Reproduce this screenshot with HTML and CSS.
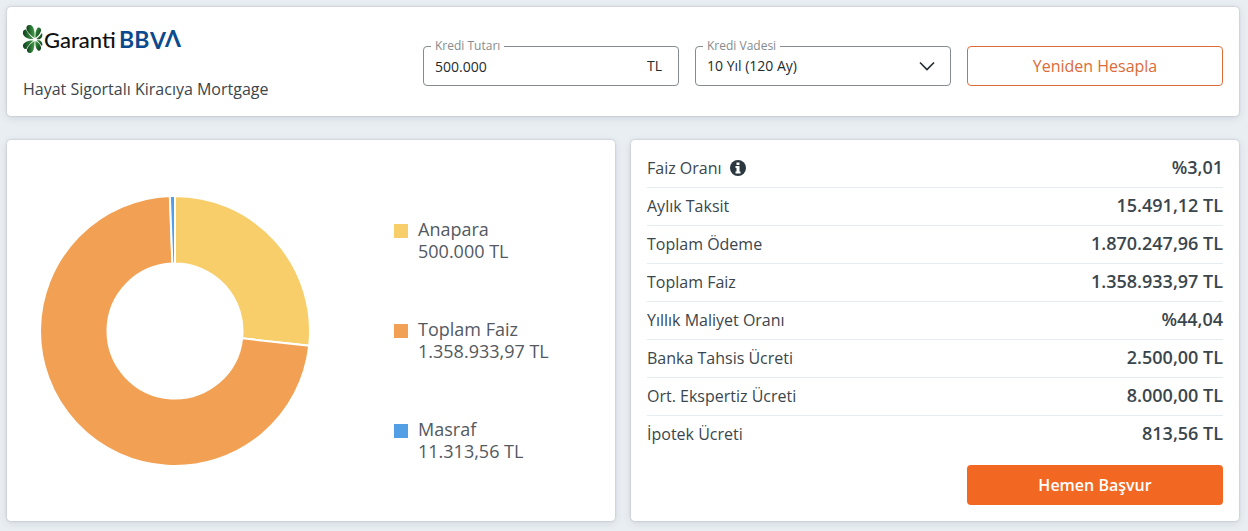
FILE: index.html
```html
<!DOCTYPE html>
<html lang="tr">
<head>
<meta charset="utf-8">
<meta name="viewport" content="width=device-width, initial-scale=1">
<title>Hayat Sigortalı Kiracıya Mortgage</title>
<link rel="stylesheet" href="styles.css">
</head>
<body>
<main class="page">
  <section class="card header">
    <div class="product">
      <svg class="logo" width="162" height="32" viewBox="0 0 162 32" role="img" aria-label="Garanti BBVA">
        <defs>
          <linearGradient id="leaf" x1="0" y1="0" x2="1" y2="0">
            <stop offset="0" stop-color="#0d3f1c"/>
            <stop offset="1" stop-color="#43a047"/>
          </linearGradient>
          <linearGradient id="leafDark" x1="0" y1="0" x2="1" y2="1">
            <stop offset="0" stop-color="#3c9a45"/>
            <stop offset="1" stop-color="#0b3517"/>
          </linearGradient>
        </defs>
        <g fill="url(#leaf)">
          <path d="M11.500 15C7 12 2.500 7.500 3.500 4C4.500 1.500 8 1.500 9.500 3.500C11.500 6 12 11 11.500 15Z"/>
          <path d="M10.500 16C6 16.500 1 14.500 0 11C-0.500 8 1 6 3 6.500C4.500 10 7.500 13 10.500 16Z"/>
          <path d="M11.500 18C11.500 23 11 28 8.500 29.500C6 31 3.500 29 4 26.500C5 23 8 20 11.500 18Z"/>
          <path d="M10.500 17.500C6 17 1 19 0 22C-0.300 25 1.500 26.500 3.500 26C5 22.500 7.500 20 10.500 17.500Z"/>
        </g>
        <g fill="url(#leafDark)">
          <path d="M12.500 15C12 11 13 6 15 4.500C17 4 18.500 6 18 8C17 11 15 13 12.500 15Z"/>
          <path d="M13.500 16C16 14 18 11 19 10C20 12 19 15 17 16C16 16.300 14.500 16.300 13.500 16Z"/>
          <path d="M12.500 18C12 22 13 26 15 27.500C17 28.500 18.500 26 18 24C17 21 15 19 12.500 18Z"/>
          <path d="M13.500 17.500C16 19 18 22 19 23C20 21 19 18.500 17 17.500C16 17 14.500 17 13.500 17.500Z"/>
        </g>
        <text class="logo-garanti" x="21" y="25">Garanti</text>
        <text class="logo-bbva" x="96" y="25">BB</text>
        <text class="logo-bbva" x="127" y="26">V</text>
        <text class="logo-bbva" x="142" y="24">Λ</text>
      </svg>
      <h1 class="product-name">Hayat Sigortalı Kiracıya Mortgage</h1>
    </div>
    <form class="calculator">
      <div class="field">
        <label class="field-label" for="amount">Kredi Tutarı</label>
        <input class="field-control" id="amount" type="text" value="500.000">
        <span class="field-unit">TL</span>
      </div>
      <div class="field">
        <label class="field-label" for="term">Kredi Vadesi</label>
        <select class="field-control field-select" id="term"><option>10 Yıl (120 Ay)</option></select>
        <svg class="chevron" width="16" height="10" viewBox="0 0 16 10" aria-hidden="true"><path d="M1 1.500L8 8.500L15 1.500"/></svg>
      </div>
      <button class="button button-outline" type="button">Yeniden Hesapla</button>
    </form>
  </section>

  <div class="columns">
    <section class="card chart">
      <svg class="donut" width="270" height="270" viewBox="-135 -135 270 270" role="img" aria-label="Ödeme dağılımı">
        <path class="fill-principal" d="M0-135A135 135 0 0 1 134.200 14.670L67.100 7.340A67.500 67.500 0 0 0 0-67.500Z"/>
        <path class="fill-interest" d="M134.200 14.670A135 135 0 1 1-5.140-134.900L-2.570-67.450A67.500 67.500 0 1 0 67.100 7.340Z"/>
        <path class="fill-cost" d="M-5.140-134.900A135 135 0 0 1 0-135L0-67.500A67.500 67.500 0 0 0-2.570-67.450Z"/>
      </svg>
      <ul class="legend">
        <li class="legend-item"><span class="swatch swatch-principal"></span><div>Anapara<br>500.000 TL</div></li>
        <li class="legend-item"><span class="swatch swatch-interest"></span><div>Toplam Faiz<br>1.358.933,97 TL</div></li>
        <li class="legend-item"><span class="swatch swatch-cost"></span><div>Masraf<br>11.313,56 TL</div></li>
      </ul>
    </section>

    <section class="card summary">
      <table class="details">
        <tr><th scope="row"><span class="with-icon">Faiz Oranı
          <svg width="16" height="16" viewBox="0 0 16 16" aria-hidden="true"><circle cx="8" cy="8" r="8" fill="#2b373e"/><path fill="#fff" d="M6.500 2.500h3v2.500h-3zM5.500 6h4v5.500h1v2h-5v-2h1v-3.500h-1z"/></svg></span></th><td>%3,01</td></tr>
        <tr><th scope="row">Aylık Taksit</th><td>15.491,12 TL</td></tr>
        <tr><th scope="row">Toplam Ödeme</th><td>1.870.247,96 TL</td></tr>
        <tr><th scope="row">Toplam Faiz</th><td>1.358.933,97 TL</td></tr>
        <tr><th scope="row">Yıllık Maliyet Oranı</th><td>%44,04</td></tr>
        <tr><th scope="row">Banka Tahsis Ücreti</th><td>2.500,00 TL</td></tr>
        <tr><th scope="row">Ort. Ekspertiz Ücreti</th><td>8.000,00 TL</td></tr>
        <tr><th scope="row">İpotek Ücreti</th><td>813,56 TL</td></tr>
      </table>
      <button class="button button-primary" type="button">Hemen Başvur</button>
    </section>
  </div>
</main>
</body>
</html>
```

FILE: styles.css
```css
* {
  box-sizing: border-box;
}

body {
  margin: 0;
  background: #e9eef2;
  color: #3b464c;
  font-family: "Open Sans", "Noto Sans", sans-serif;
  font-size: 16px;
}

.page {
  display: flex;
  flex-direction: column;
  gap: 24px;
  padding: 7px 9px 9px 7px;
}

.card {
  background: #fff;
  border-radius: 4px;
  box-shadow: 0 0 2px rgba(40, 60, 75, 0.3), 0 2px 8px rgba(40, 60, 75, 0.12);
}

.header {
  display: grid;
  grid-template-columns: 1fr 2fr;
  align-items: start;
  padding: 16px;
}

.product {
  display: flex;
  flex-direction: column;
  gap: 23px;
}

.logo {
  display: block;
}

.logo-garanti {
  font: 500 22px Lato, sans-serif;
  fill: #111;
}

.logo-bbva {
  font: 700 23px Lato, sans-serif;
  fill: #0b4a8c;
}

.product-name {
  margin: 0;
  font-size: 16px;
  font-weight: 400;
  line-height: 22px;
}

.calculator {
  display: grid;
  grid-template-columns: repeat(3, 1fr);
  gap: 16px;
  padding-top: 23px;
}

.field {
  position: relative;
  display: flex;
  align-items: center;
  height: 40px;
  border: 1px solid #858b8e;
  border-radius: 4px;
}

.field-label {
  position: absolute;
  top: -9px;
  left: 7px;
  padding: 0 4px;
  background: #fff;
  color: #858b8e;
  font-size: 12px;
  line-height: 16px;
}

.field-control {
  flex: 1;
  min-width: 0;
  height: 100%;
  padding: 0 11px;
  border: 0;
  background: transparent;
  color: #222b30;
  font: inherit;
  font-size: 14px;
  appearance: none;
}

.field-select {
  padding-bottom: 2px;
}

.field-unit {
  padding: 0 16px 2px 0;
  color: #222b30;
  font-size: 14px;
}

.chevron {
  position: absolute;
  right: 15px;
  fill: none;
  stroke: #222b30;
  stroke-width: 1.6;
  pointer-events: none;
}

.button {
  height: 40px;
  border-radius: 4px;
  font: inherit;
}

.button-outline {
  border: 1px solid #dc6b38;
  background: #fff;
  color: #dc6b38;
}

.button-primary {
  align-self: flex-end;
  width: 256px;
  border: 0;
  background: #f26722;
  color: #fff;
  font-weight: 600;
}

.columns {
  display: grid;
  grid-template-columns: 1fr 1fr;
  gap: 16px;
}

.chart {
  display: flex;
  align-items: center;
  gap: 84px;
  padding: 16px 33px;
}

.donut {
  flex: none;
  stroke: #fff;
  stroke-width: 2;
}

.fill-principal { fill: #f8ce6b; }
.fill-interest { fill: #f2a154; }
.fill-cost { fill: #529fe5; }

.legend {
  display: flex;
  flex-direction: column;
  gap: 56px;
  margin: 18px 0 0;
  padding: 0;
  list-style: none;
  color: #53595f;
  font-size: 18px;
  font-weight: 400;
  line-height: 22px;
}

.legend-item {
  display: flex;
  gap: 10px;
}

.swatch {
  width: 14px;
  height: 14px;
  margin-top: 6px;
}

.swatch-principal { background: #f8ce6b; }
.swatch-interest { background: #f2a154; }
.swatch-cost { background: #529fe5; }

.summary {
  display: flex;
  flex-direction: column;
  gap: 11px;
  padding: 10px 16px 16px;
}

.details {
  width: 100%;
  border-spacing: 0;
}

.details th,
.details td {
  height: 38px;
  padding: 0 0 2px;
  border-bottom: 1px solid #e6edf0;
}

.details tr:last-child th,
.details tr:last-child td {
  border-bottom-color: transparent;
}

.details th {
  font-weight: 400;
  text-align: left;
}

.details td {
  padding-bottom: 4px;
  font-size: 18px;
  font-weight: 600;
  text-align: right;
}

.with-icon {
  display: flex;
  align-items: center;
  gap: 8px;
}
```
